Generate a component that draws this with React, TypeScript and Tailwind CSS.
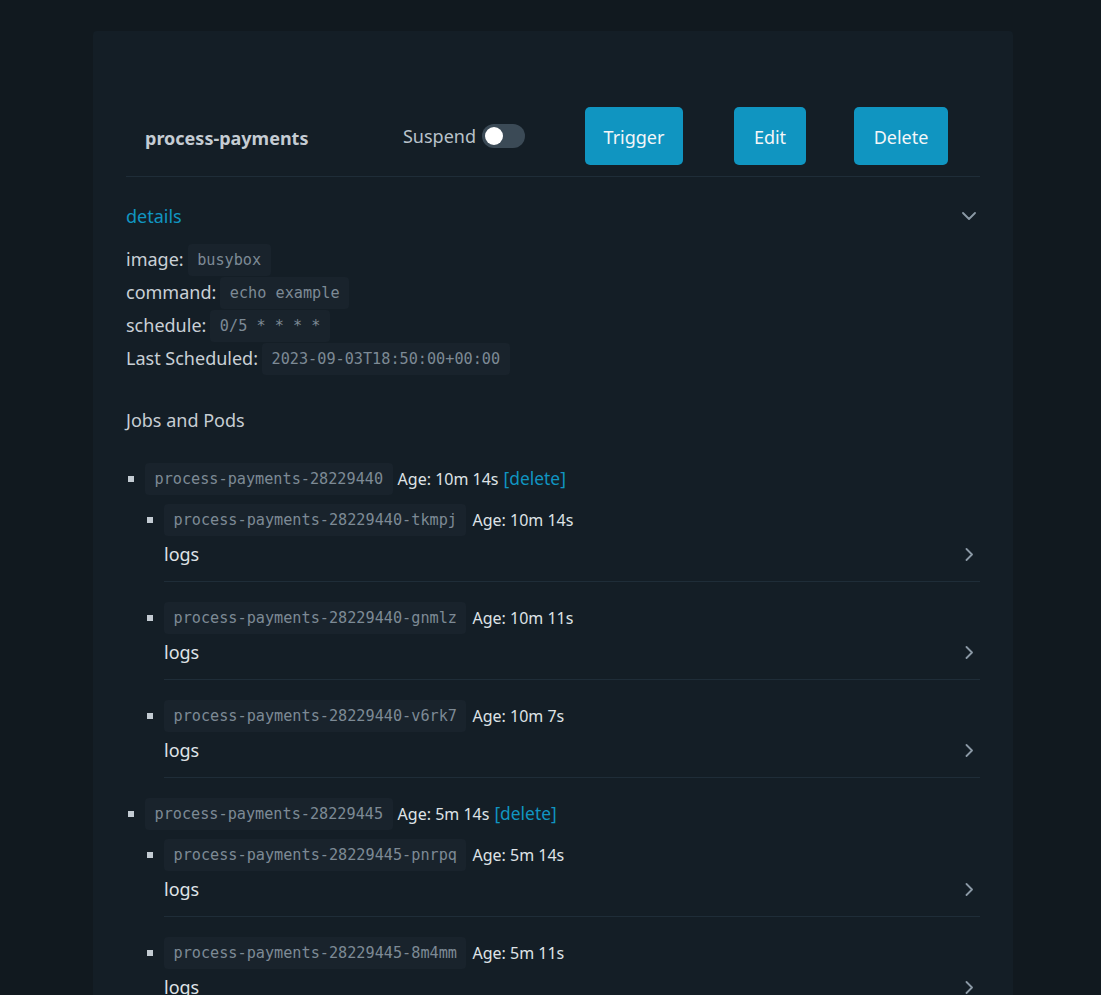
import React from 'react';

interface Pod {
  name: string;
  age: string;
}

interface Job {
  name: string;
  age: string;
  pods: Pod[];
}

const JOBS: Job[] = [
  {
    name: 'process-payments-28229440',
    age: '10m 14s',
    pods: [
      { name: 'process-payments-28229440-tkmpj', age: '10m 14s' },
      { name: 'process-payments-28229440-gnmlz', age: '10m 11s' },
      { name: 'process-payments-28229440-v6rk7', age: '10m 7s' },
    ],
  },
  {
    name: 'process-payments-28229445',
    age: '5m 14s',
    pods: [
      { name: 'process-payments-28229445-pnrpq', age: '5m 14s' },
      { name: 'process-payments-28229445-8m4mm', age: '5m 11s' },
    ],
  },
];

const DETAILS = [
  { label: 'image:', value: 'busybox' },
  { label: 'command:', value: 'echo example' },
  { label: 'schedule:', value: '0/5 * * * *' },
  { label: 'Last Scheduled:', value: '2023-09-03T18:50:00+00:00' },
];

const mono = "font-['DejaVu_Sans_Mono',monospace]";

const Code: React.FC<{ children: React.ReactNode }> = ({ children }) => (
  <span
    className={`${mono} inline-block whitespace-pre rounded-[4px] bg-[#19232c] px-[9.5px] py-[7px] text-[15.2px] leading-[18px] text-[#7d8a95]`}
  >
    {children}
  </span>
);

const Bullet = () => <span className="ml-[2px] block h-[6px] w-[6px] bg-[#c3cbd2]" />;

const ChevronDown = () => (
  <svg width="14" height="8" viewBox="0 0 14 8" fill="none" className="mr-[4px]">
    <path d="M1 1l6 6 6-6" stroke="#8b99a5" strokeWidth="1.8" strokeLinecap="round" strokeLinejoin="round" />
  </svg>
);

const ChevronRight = () => (
  <svg width="8" height="13" viewBox="0 0 8 13" fill="none" className="mr-[7px]">
    <path d="M1.5 1l5.5 5.5-5.5 5.5" stroke="#8b99a5" strokeWidth="1.8" strokeLinecap="round" strokeLinejoin="round" />
  </svg>
);

const PodItem: React.FC<{ pod: Pod }> = ({ pod }) => (
  <div className="mb-[19px]">
    <div className="flex h-[33px] items-center">
      <div className="w-[19px]">
        <Bullet />
      </div>
      <Code>{pod.name}</Code>
      <span className="ml-[6px] text-[16px] text-[#dfe3e7]">Age: {pod.age}</span>
    </div>
    <div className="ml-[19px] border-b border-[#1f2d38] pb-[9px]">
      <div className="flex h-[36px] items-center justify-between">
        <span className="text-[18px] text-[#dfe3e7]">logs</span>
        <ChevronRight />
      </div>
    </div>
  </div>
);

const JobItem: React.FC<{ job: Job }> = ({ job }) => (
  <div>
    <div className="flex h-[33px] items-center">
      <div className="w-[19px]">
        <Bullet />
      </div>
      <Code>{job.name}</Code>
      <span className="ml-[5px] text-[16px] text-[#dfe3e7]">Age: {job.age}</span>
      <span className="ml-[5px] text-[17.4px] text-[#1095c1]">[delete]</span>
    </div>
    <div className="mt-[8px] pl-[19px]">
      {job.pods.map((p) => (
        <PodItem key={p.name} pod={p} />
      ))}
    </div>
  </div>
);

export default function App() {
  return (
    <div className="min-h-screen bg-[#11191f] pl-[5px] pt-[31px] font-['Noto_Sans',sans-serif] text-[#c6cdd3]">
      <div className="mx-auto w-[920px] rounded-[4px] bg-[#141e26] px-[33px] pb-[32px]">
        {/* header */}
        <div className="flex items-center border-b border-[#1f2d38] pb-[11px] pt-[76px]">
          <div className="flex h-[58px] items-center pl-[19px] pt-[4px]">
            <span className="text-[18px] font-bold text-[#c5ccd3]">process-payments</span>
          </div>
          <div className="flex-1" />
          <div className="flex items-center gap-[6px]">
            <span className="text-[18px] text-[#b9c2ca]">Suspend</span>
            <span className="flex h-[24px] w-[43px] items-center rounded-full bg-[#3b4a56] pl-[3px]">
              <span className="h-[18px] w-[18px] rounded-full bg-white" />
            </span>
          </div>
          <button className="ml-[60px] h-[58px] w-[98px] rounded-[5px] bg-[#1095c1] pt-[3px] text-[18px] text-[#f3f6f8]">
            Trigger
          </button>
          <button className="ml-[51px] h-[58px] w-[72px] rounded-[5px] bg-[#1095c1] pt-[3px] text-[18px] text-[#f3f6f8]">
            Edit
          </button>
          <button className="ml-[48px] mr-[32px] h-[58px] w-[94px] rounded-[5px] bg-[#1095c1] pt-[3px] text-[18px] text-[#f3f6f8]">
            Delete
          </button>
        </div>

        {/* details */}
        <div className="mt-[22px] flex h-[34px] items-center justify-between">
          <span className="text-[18px] text-[#1095c1]">details</span>
          <ChevronDown />
        </div>
        <div className="mt-[10px]">
          {DETAILS.map((d) => (
            <div key={d.label} className="flex h-[33px] items-center gap-[4px]">
              <span className="text-[18px] text-[#c9d0d6]">{d.label}</span>
              <Code>{d.value}</Code>
            </div>
          ))}
        </div>

        <div className="mt-[30px] flex h-[30px] items-center text-[18px] text-[#c6cdd3]">Jobs and Pods</div>

        <div className="mt-[27px]">
          {JOBS.map((j) => (
            <JobItem key={j.name} job={j} />
          ))}
        </div>
      </div>
    </div>
  );
}
